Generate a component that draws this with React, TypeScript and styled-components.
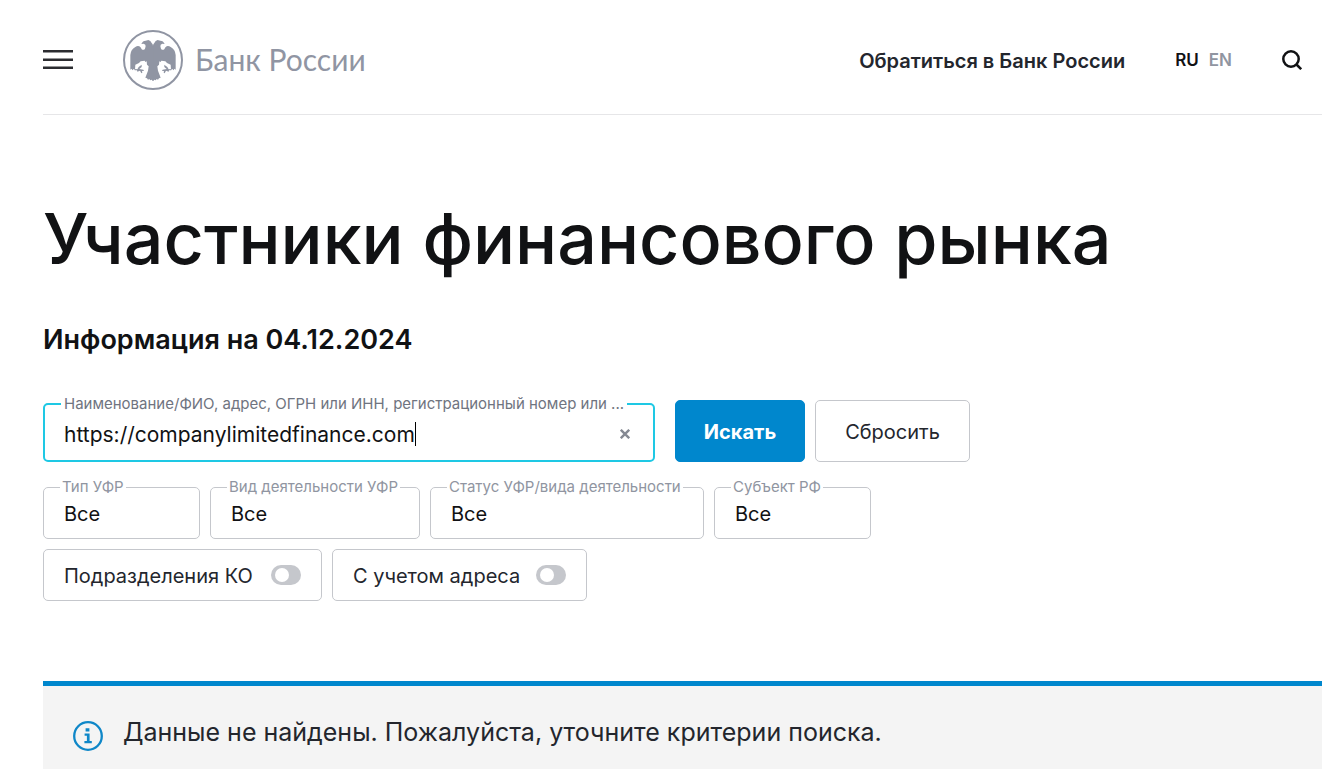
import React, { useState } from "react";
import styled, { createGlobalStyle, css } from "styled-components";

const sans = `Inter, "Noto Sans", sans-serif`;

const GlobalStyle = createGlobalStyle`
  *, *::before, *::after { box-sizing: border-box; }
  body { margin: 0; background: #fff; color: #23262d; font-family: ${sans}; font-size: 20px; }
  button, input, select { font: inherit; color: inherit; }
  a { color: inherit; text-decoration: none; }
`;

const Page = styled.div`
  padding: 0 3px 0 43px;
  min-height: 100vh;
  display: flex;
  flex-direction: column;
  overflow-x: hidden;
`;

const Header = styled.header`
  display: flex;
  padding: 4px 20px 0 0;
  height: 115px;
  border-bottom: 1px solid #e6e6e8;
`;

const HeaderPart = styled.div<{ $push?: boolean }>`
  display: flex;
  align-items: center;
  height: 112px;
  gap: 50px;
  ${(p) => p.$push && css`margin-left: auto;`}
`;

const IconButton = styled.button`
  display: flex;
  padding: 0;
  border: 0;
  background: none;
  cursor: pointer;
`;

const LogoLink = styled.a`
  display: flex;
  align-items: center;
  gap: 12px;
  color: #9095a3;
  font: 400 30px/36px Lato, "Open Sans", sans-serif;
`;

const LogoText = styled.span`
  padding-bottom: 2px;
`;

const ContactLink = styled.a`
  padding-top: 2px;
  font-size: 20px;
  line-height: 24px;
  font-weight: 600;
`;

const Languages = styled.nav`
  display: flex;
  gap: 10px;
  font-size: 17px;
  line-height: 24px;
  font-weight: 600;
`;

const Language = styled.a<{ $active?: boolean }>`
  color: ${(p) => (p.$active ? "#111214" : "#9095a1")};
`;

const Title = styled.h1`
  margin: 80px 0 0;
  color: #111214;
  font-size: 70px;
  line-height: 88px;
  font-weight: 500;
`;

const Subtitle = styled.h2`
  margin: 41px 0 0;
  color: #111214;
  font-size: 27px;
  line-height: 32px;
  font-weight: 600;
`;

const Form = styled.form`
  display: flex;
  flex-direction: column;
  margin-top: 39px;
`;

const SearchRow = styled.div`
  display: flex;
  align-items: flex-end;
  gap: 10px;
`;

const Group = styled.fieldset<{ $width: number; $active?: boolean }>`
  flex: 0 1 ${(p) => p.$width}px;
  min-width: 0;
  margin: 0;
  padding: 0 ${(p) => (p.$active ? 23 : 15)}px 0 ${(p) => (p.$active ? 19 : 20)}px;
  height: ${(p) => (p.$active ? 67 : 61)}px;
  border: ${(p) => (p.$active ? "2px solid #1ec8e4" : "1px solid #c5c7cc")};
  border-radius: 5px;
  ${(p) => p.$active && css`margin-right: 10px;`}
`;

const Legend = styled.legend<{ $active?: boolean }>`
  margin-left: ${(p) => (p.$active ? -3 : -4)}px;
  padding: 0 ${(p) => (p.$active ? 3 : 2)}px;
  white-space: nowrap;
  font-size: 15px;
  line-height: 18px;
  color: ${(p) => (p.$active ? "#6f7480" : "#9095a1")};
`;

const SearchBody = styled.div`
  display: flex;
  align-items: center;
  height: 42px;
  color: #111214;
`;

const SearchInput = styled.input`
  field-sizing: content;
  min-width: 0;
  padding: 0;
  border: 0;
  outline: 0;
  background: none;
  font-size: 21px;
`;

const Caret = styled.span`
  width: 1px;
  height: 24px;
  background: #000;
`;

const ClearButton = styled(IconButton)`
  margin-left: auto;
`;

const Button = styled.button<{ $primary?: boolean }>`
  width: ${(p) => (p.$primary ? 130 : 155)}px;
  height: 62px;
  padding: 2px 0 0;
  border: 1px solid ${(p) => (p.$primary ? "#0087cd" : "#c5c7cc")};
  border-radius: 5px;
  background: ${(p) => (p.$primary ? "#0087cd" : "#fff")};
  color: ${(p) => (p.$primary ? "#fff" : "#23262d")};
  font-weight: ${(p) => (p.$primary ? 700 : 400)};
  cursor: pointer;
`;

const Filters = styled.div<{ $top: number }>`
  display: flex;
  flex-wrap: wrap;
  gap: 10px;
  margin-top: ${(p) => p.$top}px;
`;

const Select = styled.select`
  appearance: none;
  display: block;
  width: 100%;
  height: 36px;
  padding: 0;
  border: 0;
  background: none;
  color: #111214;
`;

const ToggleBox = styled.label<{ $width: number }>`
  display: flex;
  align-items: center;
  justify-content: space-between;
  width: ${(p) => p.$width}px;
  height: 52px;
  padding: 0 20px;
  border: 1px solid #c5c7cc;
  border-radius: 5px;
`;

const ToggleText = styled.span`
  padding-top: 2px;
  white-space: nowrap;
`;

const Toggle = styled.input`
  appearance: none;
  width: 30px;
  height: 20px;
  margin: 0;
  padding: 3px 4px;
  border-radius: 10px;
  background: #c5c7cc;
  &::before {
    content: "";
    display: block;
    width: 14px;
    height: 14px;
    border-radius: 7px;
    background: #fff;
  }
  &:checked { background: #0087cd; padding-left: 12px; }
`;

const Notice = styled.section`
  display: flex;
  gap: 20px;
  flex: 1;
  margin-top: 80px;
  padding: 30px;
  border-top: 5px solid #0087cd;
  background: #f4f4f4;
`;

const NoticeIcon = styled.svg`
  flex: none;
  margin-top: 5px;
`;

const NoticeText = styled.p`
  margin: 0;
  font-size: 25px;
  line-height: 32px;
`;

const eagleHalf =
  "M128 79 L129 77 Q129 72 133 69 Q136 62 143 60 L151 62 Q160 62 164 72 L157 71 L152 74 Q150 79 153 86 Q157 92 163 88 Q165 82 170 79 Q176 77 182 81 Q196 89 197 105 L197 149 L193 146 L191 151 L187 147 L183 150 L182 134 L171 129 L166 124 L154 122 L152 126 L148 124 L147 134 L142 139 L144 152 L152 173 L147 175 L144 179 L140 177 L137 181 L133 179 L129 183 L128 183 Z";

const eagleClaw =
  "M163 134 L172 141 L176 148 L182 147 L184 151 L177 151 L176 155 L168 152 L164 160 L161 158 L162 153 L156 153 L158 149 L170 147 L163 141 Z";

function Eagle() {
  return (
    <svg width="60" height="60" viewBox="39 30 180 180" fill="currentColor" aria-hidden="true">
      <circle cx="129" cy="120" r="87" fill="none" stroke="currentColor" strokeWidth="6" />
      <path d={eagleHalf} />
      <path d={eagleClaw} />
      <path d={eagleHalf} transform="matrix(-1 0 0 1 258 0)" />
      <path d={eagleClaw} transform="matrix(-1 0 0 1 258 0)" />
    </svg>
  );
}

const filters = [
  { id: "type", label: "Тип УФР", width: 157 },
  { id: "activity", label: "Вид деятельности УФР", width: 210 },
  { id: "status", label: "Статус УФР/вида деятельности", width: 274 },
  { id: "region", label: "Субъект РФ", width: 157 },
];

export default function App() {
  const [query, setQuery] = useState("https://companylimitedfinance.com");
  return (
    <>
      <GlobalStyle />
      <Page>
        <Header>
          <HeaderPart>
            <IconButton type="button" aria-label="Меню">
              <svg width="30" height="20" viewBox="0 0 30 20" fill="#2b2c30">
                <path d="M0 0h30v2.5H0zM0 8.5h30v2.5H0zM0 16.5h30v2.5H0z" />
              </svg>
            </IconButton>
            <LogoLink href="#">
              <Eagle />
              <LogoText>Банк России</LogoText>
            </LogoLink>
          </HeaderPart>
          <HeaderPart $push>
            <ContactLink href="#contact">Обратиться в Банк России</ContactLink>
            <Languages>
              <Language href="#ru" $active>RU</Language>
              <Language href="#en">EN</Language>
            </Languages>
            <IconButton type="button" aria-label="Поиск">
              <svg width="20" height="20" viewBox="0 0 20 20" fill="none" stroke="#111214" strokeWidth="2.5">
                <circle cx="9" cy="9" r="7.7" />
                <path d="M14.5 14.5 L19.2 19.2" />
              </svg>
            </IconButton>
          </HeaderPart>
        </Header>
        <main>
          <Title>Участники финансового рынка</Title>
          <Subtitle>Информация на 04.12.2024</Subtitle>
          <Form onSubmit={(e) => e.preventDefault()}>
            <SearchRow>
              <Group $width={612} $active>
                <Legend $active>
                  <label htmlFor="query">
                    Наименование/ФИО, адрес, ОГРН или ИНН, регистрационный номер или ...
                  </label>
                </Legend>
                <SearchBody>
                  <SearchInput id="query" value={query} onChange={(e) => setQuery(e.target.value)} />
                  <Caret />
                  <ClearButton type="button" aria-label="Очистить" onClick={() => setQuery("")}>
                    <svg width="10" height="10" viewBox="0 0 10 10" stroke="#858993" strokeWidth="2.4">
                      <path d="M0.8 0.8 L9.2 9.2 M9.2 0.8 L0.8 9.2" />
                    </svg>
                  </ClearButton>
                </SearchBody>
              </Group>
              <Button type="submit" $primary>Искать</Button>
              <Button type="reset">Сбросить</Button>
            </SearchRow>
            <Filters $top={16}>
              {filters.map((f) => (
                <Group key={f.id} $width={f.width}>
                  <Legend>
                    <label htmlFor={f.id}>{f.label}</label>
                  </Legend>
                  <Select id={f.id}>
                    <option>Все</option>
                  </Select>
                </Group>
              ))}
            </Filters>
            <Filters $top={10}>
              <ToggleBox $width={279}>
                <ToggleText>Подразделения КО</ToggleText>
                <Toggle type="checkbox" />
              </ToggleBox>
              <ToggleBox $width={255}>
                <ToggleText>С учетом адреса</ToggleText>
                <Toggle type="checkbox" />
              </ToggleBox>
            </Filters>
          </Form>
        </main>
        <Notice>
          <NoticeIcon width="30" height="30" viewBox="0 0 30 30" fill="#0f87c8">
            <circle cx="15" cy="15" r="13.8" fill="none" stroke="#0f87c8" strokeWidth="2.3" />
            <path d="M12.6 7.2h3.8v3.4h-3.8zM11.6 12.5h5v7.4h2.2v2.3h-7.4v-2.3h2.5v-5.1h-2.3z" />
          </NoticeIcon>
          <NoticeText>Данные не найдены. Пожалуйста, уточните критерии поиска.</NoticeText>
        </Notice>
      </Page>
    </>
  );
}
